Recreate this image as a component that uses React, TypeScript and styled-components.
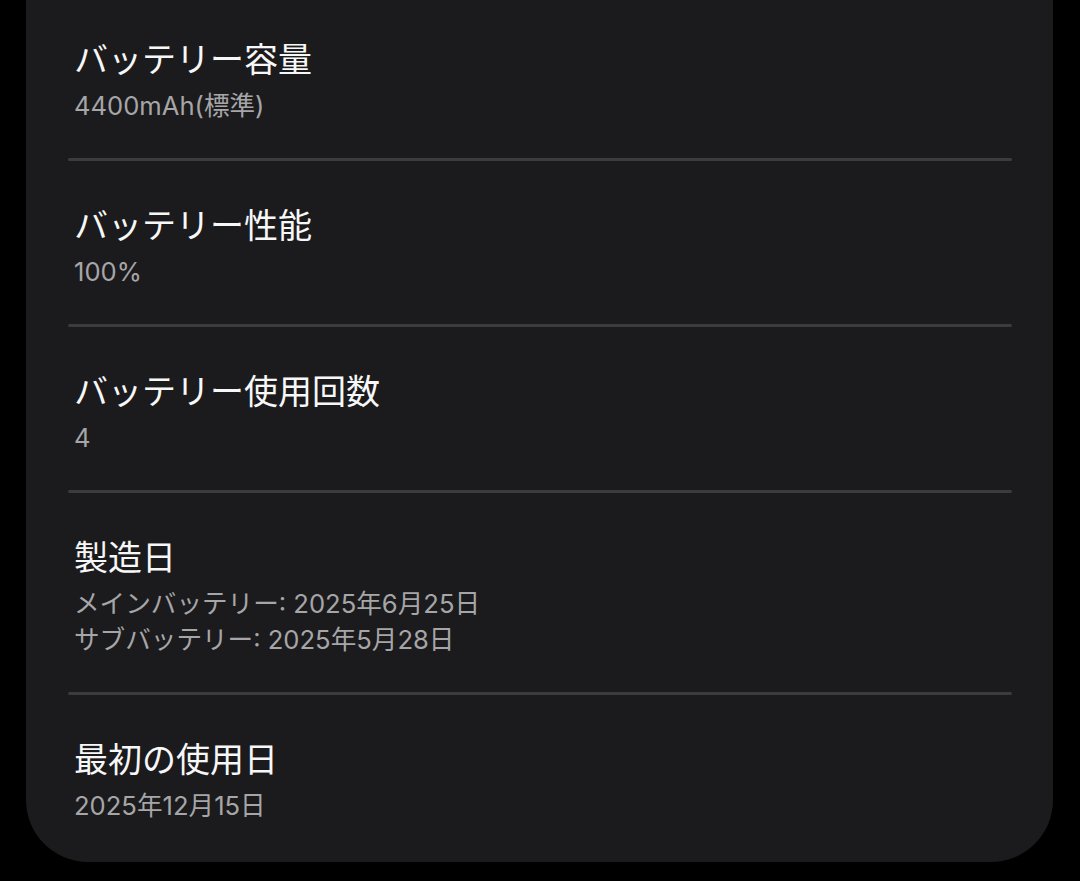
import React from "react";
import styled, { createGlobalStyle } from "styled-components";

const GlobalStyle = createGlobalStyle`
  html, body {
    margin: 0;
    padding: 0;
    background: #000000;
  }
  body {
    width: 1080px;
    height: 881px;
    overflow: hidden;
    font-family: Inter, "Noto Sans CJK JP", sans-serif;
    -webkit-font-smoothing: antialiased;
  }
`;

const Page = styled.div`
  width: 1080px;
  height: 881px;
  background: #000000;
  padding: 0 27px 0 26px;
  box-sizing: border-box;
`;

const Card = styled.section`
  margin-top: -5px;
  background: #1b1b1d;
  border-radius: 0 0 62px 62px;
  padding: 0 41px 4px 42px;
  display: flex;
  flex-direction: column;
`;

const Row = styled.div`
  display: flex;
  flex-direction: column;
  padding: 40px 6px 34px;
`;

const Divider = styled.hr`
  margin: 0;
  border: none;
  height: 3px;
  background: #3c3c3e;
  border-radius: 2px;
`;

const Title = styled.div`
  font-family: "Noto Sans CJK JP", sans-serif;
  font-size: 34px;
  line-height: 46px;
  color: #f7f7f7;
  margin-bottom: 7px;
`;

const Value = styled.div`
  font-family: Inter, "Noto Sans CJK JP", sans-serif;
  font-size: 25.6px;
  line-height: 36px;
  color: #a6a6a8;
`;

type Item = { title: string; values: string[] };

const items: Item[] = [
  { title: "バッテリー容量", values: ["4400mAh(標準)"] },
  { title: "バッテリー性能", values: ["100%"] },
  { title: "バッテリー使用回数", values: ["4"] },
  {
    title: "製造日",
    values: ["メインバッテリー: 2025年6月25日", "サブバッテリー: 2025年5月28日"],
  },
  { title: "最初の使用日", values: ["2025年12月15日"] },
];

export default function App() {
  return (
    <>
      <GlobalStyle />
      <Page>
        <Card>
          {items.map((item, i) => (
            <React.Fragment key={item.title}>
              {i > 0 && <Divider />}
              <Row>
                <Title>{item.title}</Title>
                {item.values.map((v) => (
                  <Value key={v}>{v}</Value>
                ))}
              </Row>
            </React.Fragment>
          ))}
        </Card>
      </Page>
    </>
  );
}
